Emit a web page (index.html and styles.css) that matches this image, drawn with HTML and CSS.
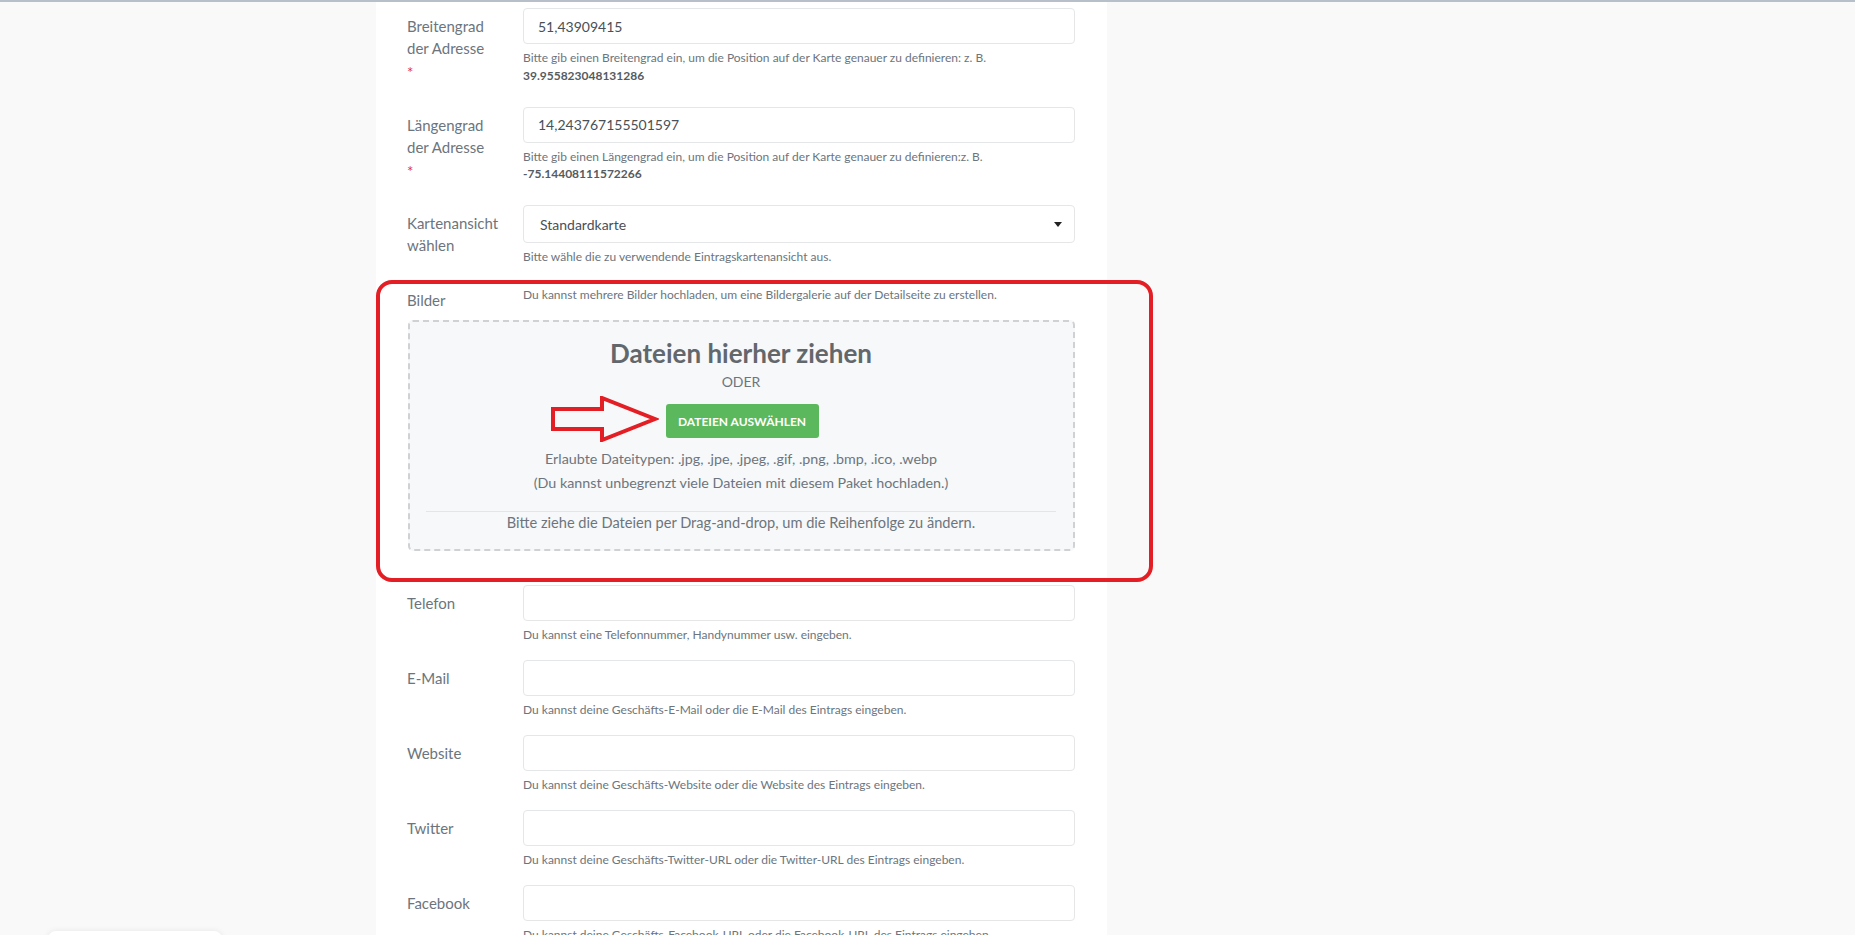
FILE: index.html
```html
<!DOCTYPE html>
<html lang="de">
<head>
<meta charset="utf-8">
<title>Eintrag bearbeiten</title>
<link rel="stylesheet" href="styles.css">
</head>
<body>
<div class="topline"></div>
<div class="page">
  <div class="card">
    <div class="row">
      <label class="lbl">Breitengrad der Adresse <span class="req">*</span></label>
      <div class="field">
        <input class="input" type="text" value="51,43909415">
        <div class="help">Bitte gib einen Breitengrad ein, um die Position auf der Karte genauer zu definieren: z. B. <b>39.955823048131286</b></div>
      </div>
    </div>
    <div class="row">
      <label class="lbl">Längengrad der Adresse <span class="req">*</span></label>
      <div class="field">
        <input class="input" type="text" value="14,243767155501597">
        <div class="help">Bitte gib einen Längengrad ein, um die Position auf der Karte genauer zu definieren:z. B. <b>-75.14408111572266</b></div>
      </div>
    </div>
    <div class="row">
      <label class="lbl">Kartenansicht wählen</label>
      <div class="field">
        <div class="select"><span>Standardkarte</span><span class="caret"></span></div>
        <div class="help">Bitte wähle die zu verwendende Eintragskartenansicht aus.</div>
      </div>
    </div>
    <div class="row row-bilder">
      <label class="lbl">Bilder</label>
      <div class="field">
        <div class="help help-top">Du kannst mehrere Bilder hochladen, um eine Bildergalerie auf der Detailseite zu erstellen.</div>
      </div>
    </div>
    <div class="dropzone">
      <div class="dz-title">Dateien hierher ziehen</div>
      <div class="dz-or">ODER</div>
      <button class="dz-btn" type="button">DATEIEN AUSWÄHLEN</button>
      <div class="dz-info">Erlaubte Dateitypen: .jpg, .jpe, .jpeg, .gif, .png, .bmp, .ico, .webp<br>(Du kannst unbegrenzt viele Dateien mit diesem Paket hochladen.)</div>
      <div class="dz-sep"></div>
      <div class="dz-note">Bitte ziehe die Dateien per Drag-and-drop, um die Reihenfolge zu ändern.</div>
      <svg class="arrow" width="108" height="46" viewBox="0 0 108 46" aria-hidden="true">
        <polygon points="2,13 51,13 51,2 104,23 51,44 51,33 2,33" fill="none" stroke="#e31e24" stroke-width="4" stroke-linejoin="miter"/>
      </svg>
    </div>
    <div class="row">
      <label class="lbl">Telefon</label>
      <div class="field">
        <input class="input" type="text">
        <div class="help">Du kannst eine Telefonnummer, Handynummer usw. eingeben.</div>
      </div>
    </div>
    <div class="row">
      <label class="lbl">E-Mail</label>
      <div class="field">
        <input class="input" type="text">
        <div class="help">Du kannst deine Geschäfts-E-Mail oder die E-Mail des Eintrags eingeben.</div>
      </div>
    </div>
    <div class="row">
      <label class="lbl">Website</label>
      <div class="field">
        <input class="input" type="text">
        <div class="help">Du kannst deine Geschäfts-Website oder die Website des Eintrags eingeben.</div>
      </div>
    </div>
    <div class="row">
      <label class="lbl">Twitter</label>
      <div class="field">
        <input class="input" type="text">
        <div class="help">Du kannst deine Geschäfts-Twitter-URL oder die Twitter-URL des Eintrags eingeben.</div>
      </div>
    </div>
    <div class="row">
      <label class="lbl">Facebook</label>
      <div class="field">
        <input class="input" type="text">
        <div class="help">Du kannst deine Geschäfts-Facebook-URL oder die Facebook-URL des Eintrags eingeben.</div>
      </div>
    </div>
  </div>
  <div class="highlight"></div>
</div>
<div class="widget"></div>
</body>
</html>
```
FILE: styles.css
```css
html, body {
  margin: 0;
  padding: 0;
}
body {
  background: #f9f9f9;
  font-family: "Lato", "Noto Sans", sans-serif;
  color: #6c757d;
  height: 935px;
  overflow: hidden;
  position: relative;
}
.topline {
  height: 2px;
  background: #b7bfca;
}
.page {
  position: relative;
  padding-left: 376px;
}
.card {
  width: 731px;
  box-sizing: border-box;
  background: #fff;
  padding: 6px 32px 40px 31px;
}
.row {
  display: grid;
  grid-template-columns: 116px 552px;
  margin-bottom: 16.5px;
}
.lbl {
  font-size: 15px;
  line-height: 22px;
  padding: 7px 24px 9px 0;
  color: #6c757d;
}
.req {
  display: block;
  color: #dc3545;
  font-size: 15px;
  position: relative;
  top: 2px;
}
.field {
  display: flex;
  flex-direction: column;
}
.input {
  box-sizing: border-box;
  height: 36px;
  width: 552px;
  border: 1px solid #e4e6e8;
  border-radius: 4px;
  padding: 0 14px;
  font-family: "Lato", "Noto Sans", sans-serif;
  font-size: 14px;
  color: #495057;
  background: #fff;
  outline: none;
}
.select {
  box-sizing: border-box;
  height: 38px;
  border: 1px solid #e4e6e8;
  border-radius: 4px;
  padding: 0 12px 0 16px;
  display: flex;
  align-items: center;
  justify-content: space-between;
  font-size: 14px;
  color: #495057;
}
.caret {
  width: 0;
  height: 0;
  border-left: 4px solid transparent;
  border-right: 4px solid transparent;
  border-top: 5px solid #222;
}
.help {
  margin-top: 5px;
  font-size: 12px;
  line-height: 17.5px;
  color: #6c757d;
}
.help b {
  color: #555b61;
  font-weight: 700;
}
.help-top {
  margin-top: 4px;
}
.row-bilder {
  margin-bottom: 0;
}
.dropzone {
  position: relative;
  box-sizing: border-box;
  width: 667px;
  height: 231px;
  margin-left: 1px;
  margin-bottom: 34px;
  border: 2px dashed #cfd1d4;
  border-radius: 5px;
  background: #f7f8f9;
  padding: 16px 17px 14px 16px;
  text-align: center;
  color: #6c757d;
}
.dz-title {
  font-size: 26px;
  line-height: 30px;
  font-weight: 700;
  color: #62676c;
}
.dz-or {
  margin-top: 4px;
  font-size: 14px;
  line-height: 20px;
}
.dz-btn {
  margin-top: 12px;
  height: 34px;
  width: 153px;
  border: 0;
  border-radius: 3px;
  background: #5cb85c;
  color: #fff;
  font-family: "Lato", "Noto Sans", sans-serif;
  font-size: 12px;
  font-weight: 700;
  padding: 0;
  margin-left: 2px;
}
.dz-info {
  margin-top: 9px;
  font-size: 14.3px;
  line-height: 24px;
}
.dz-sep {
  margin-top: 16px;
  height: 1px;
  background: #e3e5e7;
}
.dz-note {
  font-size: 14.6px;
  line-height: 22px;
}
.arrow {
  position: absolute;
  left: 141px;
  top: 74px;
}
.highlight {
  position: absolute;
  left: 376px;
  top: 278px;
  width: 777px;
  height: 302px;
  box-sizing: border-box;
  border: 4px solid #e31e24;
  border-radius: 16px;
  pointer-events: none;
}
.widget {
  position: absolute;
  left: 48px;
  top: 931px;
  width: 174px;
  height: 30px;
  background: #fff;
  border-radius: 8px;
  box-shadow: 0 0 6px rgba(0, 0, 0, 0.08);
}
```
